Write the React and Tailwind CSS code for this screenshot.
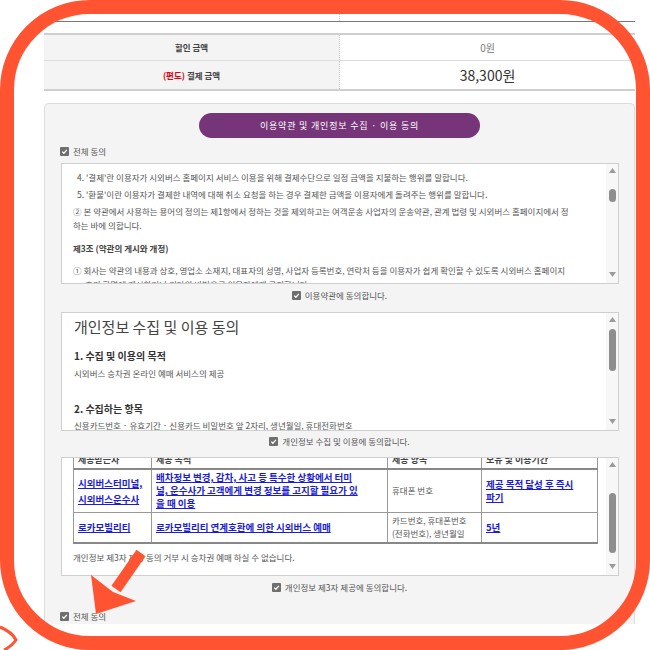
const FONT = { fontFamily: '"Noto Sans CJK KR", "Noto Sans", sans-serif' };

function Check() {
  return (
    <span className="inline-flex h-[9px] w-[9px] shrink-0 items-center justify-center rounded-[1px] bg-[#6f6f6f]">
      <svg width="7" height="7" viewBox="0 0 10 10">
        <path d="M1.8 5.2 L4.1 7.5 L8.4 2.6" fill="none" stroke="#fff" strokeWidth="1.9" />
      </svg>
    </span>
  );
}

function Agree({ label, center }) {
  return (
    <div className={`flex h-[12px] items-center gap-[4px] text-[8.5px] leading-[12px] text-[#555] ${center ? 'justify-center' : ''}`}>
      <Check />
      <span>{label}</span>
    </div>
  );
}

function Arrow({ down }) {
  return (
    <svg width="7" height="5" viewBox="0 0 7 5">
      <path d={down ? 'M0 0 H7 L3.5 5 Z' : 'M0 5 H7 L3.5 0 Z'} fill="#9a9a9a" />
    </svg>
  );
}

// fake scroll track on the right of each terms box
function Scrollbar({ thumb }) {
  return (
    <div className="flex w-[12px] shrink-0 flex-col items-center bg-[#f7f7f7] pt-[4px] pb-[6px]">
      <Arrow />
      <div className={`w-[7px] rounded-full bg-[#8e8e8e] ${thumb}`} />
      <div className="mt-auto">
        <Arrow down />
      </div>
    </div>
  );
}

const link = 'font-bold text-[#1c1cd2] underline';

export default function App() {
  return (
    <div className="relative h-[650px] w-[650px] overflow-hidden bg-white" style={FONT}>
      <div className="ml-[44px] w-[591px]">
        {/* ── previous table row (cut) ── */}
        <div className="flex h-[22px] border-b border-[#777]">
          <div className="w-[296px] border-r border-dotted border-[#ccc]" />
        </div>

        {/* ── amount table ── */}
        <div className="mt-[11px] border-t-2 border-b-2 border-[#cfcfcf]">
          <div className="flex h-[26px] border-b border-[#ddd]">
            <div className="flex w-[296px] items-center justify-center border-r border-dotted border-[#c8c8c8] bg-[#f4f4f4] text-[8.5px] font-bold text-[#444]">
              할인 금액
            </div>
            <div className="flex flex-1 items-center justify-center text-[10px] text-[#777]">0원</div>
          </div>
          <div className="flex h-[28px]">
            <div className="flex w-[296px] items-center justify-center border-r border-dotted border-[#c8c8c8] bg-[#f4f4f4] text-[8.5px] font-bold text-[#444]">
              <span className="text-[#e60012]">(편도)</span>&nbsp;결제 금액
            </div>
            <div className="flex flex-1 items-center justify-center text-[14px] text-[#333]">38,300원</div>
          </div>
        </div>

        {/* ── agreement panel ── */}
        <div className="mt-[12px] rounded-t-[5px] border border-b-0 border-[#dcdcdc] bg-[#f4f4f4] px-[15px] pt-[9px]">
          <div className="mx-auto flex h-[25px] w-[281px] items-center justify-center rounded-full bg-[#773579] text-[9px] tracking-[0.09em] text-white">
            이용약관 및 개인정보 수집 · 이용 동의
          </div>

          <div className="mt-[7px]">
            <Agree label="전체 동의" />
          </div>

          {/* terms box */}
          <div className="mt-[6px] ml-[1px] flex h-[121px] border border-[#cfcfcf] bg-white">
            <div className="flex-1 overflow-hidden pl-[11px] text-[8.5px] leading-[14px] whitespace-nowrap text-[#555]">
              <div className="-mt-[13px] pl-[4px]">3. '예매'란 이용자가 승차권을 구매하기 위해 승차일시, 구간 등을 선택하여 결제하는 행위를 말합니다.</div>
              <div className="mt-[5px] pl-[4px]">4. '결제'란 이용자가 시외버스 홈페이지 서비스 이용을 위해 결제수단으로 일정 금액을 지불하는 행위를 말합니다.</div>
              <div className="mt-[3px] pl-[4px]">5. '환불'이란 이용자가 결제한 내역에 대해 취소 요청을 하는 경우 결제한 금액을 이용자에게 돌려주는 행위를 말합니다.</div>
              <div className="mt-[3px]">
                ② 본 약관에서 사용하는 용어의 정의는 제1항에서 정하는 것을 제외하고는 여객운송 사업자의 운송약관, 관계 법령 및 시외버스 홈페이지에서 정
                <br />
                하는 바에 의합니다.
              </div>
              <div className="mt-[9px] font-bold text-[#444]">제3조 (약관의 게시와 개정)</div>
              <div className="mt-[8px]">
                ① 회사는 약관의 내용과 상호, 영업소 소재지, 대표자의 성명, 사업자 등록번호, 연락처 등을 이용자가 쉽게 확인할 수 있도록 시외버스 홈페이지
                <br />
                <span className="pl-[12px]">초기 화면에 게시하거나 기타의 방법으로 이용자에게 공지합니다.</span>
              </div>
            </div>
            <Scrollbar thumb="mt-[16px] h-[13px]" />
          </div>

          <div className="mt-[5px]">
            <Agree center label="이용약관에 동의합니다." />
          </div>

          {/* privacy box */}
          <div className="mt-[11px] ml-[1px] flex h-[119px] border border-[#cfcfcf] bg-white">
            <div className="flex-1 overflow-hidden pl-[12px] whitespace-nowrap text-[#555]">
              <div className="mt-[4px] text-[15px] leading-[20px] text-[#444]">개인정보 수집 및 이용 동의</div>
              <div className="mt-[12px] text-[10px] leading-[14px] font-bold text-[#333]">1. 수집 및 이용의 목적</div>
              <div className="mt-[3px] text-[8.5px] leading-[14px]">시외버스 승차권 온라인 예매 서비스의 제공</div>
              <div className="mt-[22px] text-[10px] leading-[14px] font-bold text-[#333]">2. 수집하는 항목</div>
              <div className="mt-[2px] text-[8.5px] leading-[14px]">신용카드번호 · 유효기간 · 신용카드 비밀번호 앞 2자리, 생년월일, 휴대전화번호</div>
            </div>
            <Scrollbar thumb="mt-[7px] h-[42px]" />
          </div>

          <div className="mt-[4px]">
            <Agree center label="개인정보 수집 및 이용에 동의합니다." />
          </div>

          {/* third party box */}
          <div className="mt-[10px] ml-[1px] flex h-[119px] border border-[#cfcfcf] bg-white">
            <div className="flex-1 overflow-hidden pl-[11px]">
              <table className="-mt-[8px] w-[524px] table-fixed border-collapse text-left text-[9px] text-[#555]">
                <colgroup>
                  <col className="w-[78px]" />
                  <col className="w-[236px]" />
                  <col className="w-[94px]" />
                  <col className="w-[116px]" />
                </colgroup>
                <thead>
                  <tr className="h-[18px] border-b-2 border-[#888]">
                    <th className="border border-[#999] px-[4px] font-bold text-[#444]">제공받는자</th>
                    <th className="border border-[#999] px-[4px] font-bold text-[#444]">제공 목적</th>
                    <th className="border border-[#999] px-[4px] font-bold text-[#444]">제공 항목</th>
                    <th className="border border-[#999] px-[4px] font-bold text-[#444]">보유 및 이용기간</th>
                  </tr>
                </thead>
                <tbody>
                  <tr className="h-[44px]">
                    <td className="border border-[#999] px-[4px] text-[9.5px] leading-[16px]">
                      <span className={link}>시외버스터미널,</span>
                      <br />
                      <span className={link}>시외버스운수사</span>
                    </td>
                    <td className="border border-[#999] px-[4px] text-[9.5px] leading-[13px] whitespace-nowrap">
                      <span className={link}>배차정보 변경, 감차, 사고 등 특수한 상황에서 터미</span>
                      <br />
                      <span className={link}>널, 운수사가 고객에게 변경 정보를 고지할 필요가 있</span>
                      <br />
                      <span className={link}>을 때 이용</span>
                    </td>
                    <td className="border border-[#999] px-[4px] text-[8.5px]">휴대폰 번호</td>
                    <td className="border border-[#999] px-[4px] text-[9.5px] leading-[13px]">
                      <span className={link}>제공 목적 달성 후 즉시</span>
                      <br />
                      <span className={link}>파기</span>
                    </td>
                  </tr>
                  <tr className="h-[30px] border-b-2 border-[#888]">
                    <td className="border border-[#999] px-[4px] text-[9.5px]">
                      <span className={link}>로카모빌리티</span>
                    </td>
                    <td className="border border-[#999] px-[4px] text-[9.5px] whitespace-nowrap">
                      <span className={link}>로카모빌리티 연계호환에 의한 시외버스 예매</span>
                    </td>
                    <td className="border border-[#999] px-[4px] text-[8.5px] leading-[13px] whitespace-nowrap">
                      카드번호, 휴대폰번호
                      <br />
                      (전화번호), 생년월일
                    </td>
                    <td className="border border-[#999] px-[4px] text-[9.5px]">
                      <span className={link}>5년</span>
                    </td>
                  </tr>
                </tbody>
              </table>
              <div className="mt-[6px] text-[8.5px] leading-[14px] whitespace-nowrap text-[#555]">
                개인정보 제3자 제공 동의 거부 시 승차권 예매 하실 수 없습니다.
              </div>
            </div>
            <Scrollbar thumb="mt-[26px] h-[60px]" />
          </div>

          <div className="mt-[5px]">
            <Agree center label="개인정보 제3자 제공에 동의합니다." />
          </div>

          <div className="mt-[17px] pb-[2px]">
            <Agree label="전체 동의" />
          </div>
        </div>
      </div>

      {/* orange highlight frame */}
      <div className="pointer-events-none absolute top-0 left-0 h-[650px] w-[650px] rounded-[90px] border-[14px] border-[#ff5331]" />
      <svg className="pointer-events-none absolute top-0 left-0" width="650" height="650" viewBox="0 0 650 650">
        <line x1="141" y1="553" x2="116" y2="589" stroke="#ff5331" strokeWidth="11" />
        <polygon points="91,575 96,614 136,601 113,592" fill="#ff5331" />
        <path d="M0 627 Q12 632 16 640 Q12 646 4 650" fill="none" stroke="#ff5331" strokeWidth="3" />
      </svg>
    </div>
  );
}
